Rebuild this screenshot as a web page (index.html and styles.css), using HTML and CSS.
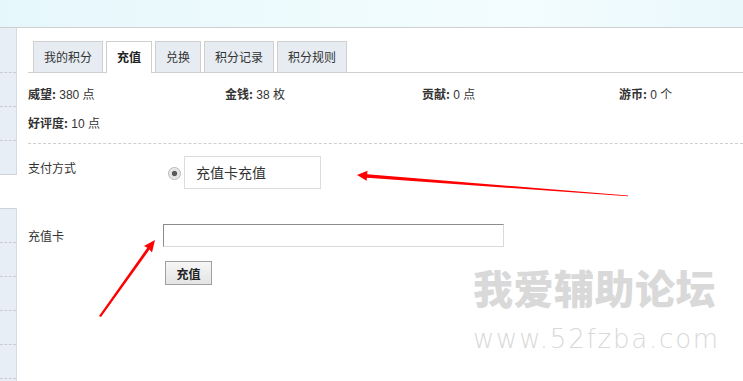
FILE: index.html
```html
<!DOCTYPE html>
<html>

<head>
    <meta charset="utf-8">
    <title>积分 - 充值</title>
    <link rel="stylesheet" href="styles.css">
</head>

<body>
    <div class="top"></div>
    <div class="page">
        <div class="side">
            <div class="side-block first">
                <div class="side-item"></div>
                <div class="side-item"></div>
                <div class="side-item"></div>
            </div>
            <div class="side-block second">
                <div class="side-item"></div>
                <div class="side-item"></div>
                <div class="side-item"></div>
                <div class="side-item"></div>
                <div class="side-item"></div>
            </div>
        </div>

        <div class="main">
            <ul class="tabs">
                <li class="tab">我的积分</li>
                <li class="tab on">充值</li>
                <li class="tab">兑换</li>
                <li class="tab">积分记录</li>
                <li class="tab">积分规则</li>
            </ul>

            <div class="stats">
                <div class="stat"><b>威望:</b> 380 点</div>
                <div class="stat"><b>金钱:</b> 38 枚</div>
                <div class="stat"><b>贡献:</b> 0 点</div>
                <div class="stat"><b>游币:</b> 0 个</div>
                <div class="stat"><b>好评度:</b> 10 点</div>
            </div>

            <div class="form">
                <div class="form-row pay">
                    <div class="form-label">支付方式</div>
                    <div class="form-field">
                        <input type="radio" class="radio" checked>
                        <span class="pay-box">充值卡充值</span>
                    </div>
                </div>
                <div class="form-row card">
                    <div class="form-label">充值卡</div>
                    <div class="form-field column">
                        <input type="text" class="card-input">
                        <button class="btn">充值</button>
                    </div>
                </div>
            </div>
        </div>
    </div>

    <svg class="arrows" width="743" height="381" viewBox="0 0 743 381">
        <polygon fill="#ff0000" points="357,175 367.5,170.8 367.2,174.2 628,195.6 628,196.2 367,177.8 366.6,180.8" />
        <polygon fill="#ff0000" points="155,240 152,252.5 149.5,249.6 101,317 99,316 147.3,247.8 144,246" />
    </svg>

    <div class="watermark">
        <div class="wm-cn">我爱辅助论坛</div>
        <div class="wm-url">www.52fzba.com</div>
    </div>
</body>

</html>
```

FILE: styles.css
```css
html, body {
    font-family: "Liberation Sans", "Noto Sans CJK SC", sans-serif;
    font-size: 12px;
    color: #333;
}
body {
    margin: 0;
    padding: 0;
    width: 743px;
    height: 381px;
    overflow: hidden;
    position: relative;
    background: #fff;
}

.top {
    height: 27px;
    border-bottom: 1px solid #cfcfcf;
    background: linear-gradient(90deg, #e6f7fc, #eefbfd 40%, #f3fcfe 70%, #eaf8fc);
}

.page {
    display: flex;
}

/* left column */
.side {
    width: 17px;
    flex-shrink: 0;
}
.side-block {
    background: #e7eef6;
    border-right: 1px solid #d3dbe4;
}
.side-block.first {
    height: 147px;
    padding-top: 11px;
    box-sizing: border-box;
    border-bottom: 1px solid #cdd3da;
}
.side-block.second {
    margin-top: 33px;
    border-top: 1px solid #cdd3da;
    height: 172px;
    overflow: hidden;
}
.side-item {
    height: 33px;
    border-bottom: 1px dashed #c9ced4;
}

/* main */
.main {
    flex: 1;
    min-width: 0;
    padding: 13px 0 0 11px;
}

.tabs {
    display: flex;
    align-items: flex-start;
    gap: 3px;
    list-style: none;
    margin: 0;
    padding: 0 0 0 5px;
    height: 31px;
    border-bottom: 1px solid #cfcfcf;
}
.tab {
    height: 30px;
    line-height: 30px;
    padding: 0 10px;
    border: 1px solid #cfcfcf;
    border-bottom: 0;
    background: #e6ecf2;
    font-family: "Noto Sans CJK SC", sans-serif;
}
.tab.on {
    background: #fff;
    height: 31px;
    font-weight: bold;
    color: #222;
}

.stats {
    display: grid;
    grid-template-columns: 197px 197px 197px 1fr;
    margin: 6px 0;
}
.stat {
    height: 29px;
    line-height: 29px;
    white-space: nowrap;
}
.stat b {
    font-family: "Noto Sans CJK SC", sans-serif;
    color: #333;
}

.form {
    border-top: 1px dashed #cfcfcf;
}
.form-row {
    display: flex;
}
.form-label {
    width: 135px;
    flex-shrink: 0;
    font-family: "Noto Sans CJK SC", sans-serif;
}
.form-field {
    display: flex;
    align-items: center;
}
.form-field.column {
    flex-direction: column;
    align-items: flex-start;
}

.pay {
    padding-top: 12px;
}
.pay .form-label {
    line-height: 24px;
}
.radio {
    appearance: none;
    width: 13px;
    height: 13px;
    margin: 2px 3px 0 5px;
    border: 1px solid #b4b4b4;
    border-radius: 50%;
    box-sizing: border-box;
    background: radial-gradient(circle, #5a5a5a 0, #5a5a5a 2.2px, #dcdcdc 3px, #f4f4f4 6px);
}
.pay-box {
    width: 137px;
    height: 33px;
    line-height: 31px;
    box-sizing: border-box;
    padding-left: 11px;
    border: 1px solid #dcdcdc;
    font-family: "Noto Sans CJK SC", sans-serif;
    font-size: 14px;
    color: #333;
}

.card {
    margin-top: 35px;
}
.card .form-label {
    line-height: 23px;
}
.card-input {
    width: 341px;
    height: 23px;
    box-sizing: border-box;
    margin: 0;
    border: 1px solid;
    border-color: #8c8c8c #dadada #dadada #8c8c8c;
    padding: 0 3px;
}
.btn {
    margin: 14px 0 0 2px;
    width: 47px;
    height: 24px;
    padding: 0;
    border: 1px solid #a0a0a0;
    background: linear-gradient(#f6f6f6, #e4e4e4);
    font-family: "Noto Sans CJK SC", sans-serif;
    font-size: 12px;
    font-weight: bold;
    color: #222;
}

/* overlays */
.arrows {
    position: absolute;
    left: 0;
    top: 0;
    pointer-events: none;
}

.watermark {
    position: absolute;
    left: 473px;
    top: 265px;
    color: #d9d9d9;
    pointer-events: none;
}
.wm-cn {
    font-family: "Noto Sans CJK SC", sans-serif;
    font-weight: 900;
    font-size: 40px;
    line-height: 44px;
    letter-spacing: 0.5px;
}
.wm-url {
    font-family: "DejaVu Sans", sans-serif;
    font-weight: 200;
    font-size: 26px;
    line-height: 30px;
    margin-top: 15px;
    letter-spacing: 1.8px;
}
```
